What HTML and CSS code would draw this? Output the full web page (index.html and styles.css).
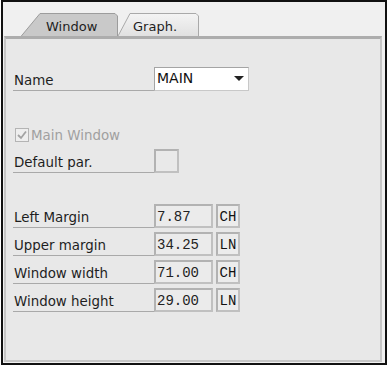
FILE: index.html
```html
<!DOCTYPE html>
<html lang="en">
<head>
  <meta charset="UTF-8">
  <title>Window attributes</title>
  <link rel="stylesheet" href="styles.css">
</head>
<body>
  <div class="frame">
    <div class="tabs">
      <div class="tab tab-active">
        <svg class="tab-shape" width="98" height="24" viewBox="0 0 98 24">
          <polygon points="0.5,24 20,0.5 95,0.5 97.5,3 97.5,24" fill="#c9c9c9" stroke="#9c9c9c"/>
        </svg>
        <span class="tab-text">Window</span>
      </div>
      <div class="tab tab-back">
        <svg class="tab-shape" width="82" height="24" viewBox="0 0 82 24">
          <defs>
            <linearGradient id="tabg" x1="0" y1="0" x2="0" y2="1">
              <stop offset="0" stop-color="#f4f4f4"/>
              <stop offset="1" stop-color="#e0e0e0"/>
            </linearGradient>
          </defs>
          <polygon points="0.5,24 13,0.5 79,0.5 81.5,3 81.5,24" fill="url(#tabg)" stroke="#a9a9a9"/>
        </svg>
        <span class="tab-text">Graph.</span>
      </div>
    </div>

    <div class="panel">
      <div class="row">
        <div class="label">Name</div>
        <div class="select">
          <span class="select-text">MAIN</span>
          <span class="arrow"></span>
        </div>
      </div>

      <div class="check-row">
        <svg class="check" width="14" height="14" viewBox="0 0 14 14">
          <rect x="0.5" y="0.5" width="13" height="13" fill="#eeeeee" stroke="#b4b4b4"/>
          <polyline points="3,7 6,10 11,3.5" fill="none" stroke="#a2a2a2" stroke-width="1.8"/>
        </svg>
        <span class="check-text">Main Window</span>
      </div>

      <div class="row">
        <div class="label">Default par.</div>
        <div class="field field-small"></div>
      </div>

      <div class="group">
        <div class="row">
          <div class="label">Left Margin</div>
          <div class="field">7.87</div>
          <div class="unit">CH</div>
        </div>
        <div class="row">
          <div class="label">Upper margin</div>
          <div class="field">34.25</div>
          <div class="unit">LN</div>
        </div>
        <div class="row">
          <div class="label">Window width</div>
          <div class="field">71.00</div>
          <div class="unit">CH</div>
        </div>
        <div class="row">
          <div class="label">Window height</div>
          <div class="field">29.00</div>
          <div class="unit">LN</div>
        </div>
      </div>
    </div>
  </div>
</body>
</html>
```

FILE: styles.css
```css
body {
  margin: 0;
  background: #ffffff;
  font-family: "DejaVu Sans", Tahoma, sans-serif;
  font-size: 13px;
  color: #1e1e1e;
}
.frame {
  margin-left: 1px;
  width: 386px;
  height: 365px;
  box-sizing: border-box;
  border: 2px solid #111;
  background: #f0f0f0;
}
.tabs {
  display: flex;
  margin-top: 11px;
  padding-left: 17px;
  height: 24px;
}
.tab {
  position: relative;
  height: 24px;
}
.tab-active {
  width: 98px;
  z-index: 2;
}
.tab-back {
  width: 82px;
  margin-left: -1px;
  z-index: 1;
}
.tab-shape {
  position: absolute;
  left: 0;
  top: 0;
}
.tab-text {
  position: relative;
  display: block;
  line-height: 15px;
  padding-top: 6px;
}
.tab-active .tab-text {
  padding-left: 26px;
}
.tab-back .tab-text {
  padding-left: 16px;
}
.panel {
  position: relative;
  z-index: 3;
  margin-left: 1px;
  margin-top: -1px;
  width: 378px;
  height: 326px;
  box-sizing: border-box;
  background: #e8e8e8;
  border: 2px solid #c6c6c6;
  border-top: 3px solid #adadad;
  padding: 28px 0 0 7px;
}
.row {
  display: flex;
  height: 24px;
}
.label {
  width: 141px;
  box-sizing: border-box;
  padding: 0 0 2px 1px;
  border-bottom: 1px solid #a9a9a9;
  display: flex;
  align-items: flex-end;
  line-height: 15px;
  font-size: 13.4px;
}
.select {
  width: 95px;
  box-sizing: border-box;
  background: #ffffff;
  border: 1px solid #a4a4a4;
  border-bottom-color: #c8c8c8;
  border-right-color: #c8c8c8;
  display: flex;
  justify-content: space-between;
  padding: 2px 4px 0 2px;
}
.select-text {
  font-size: 14px;
  line-height: 16px;
  color: #111;
}
.arrow {
  margin-top: 6px;
  width: 0;
  height: 0;
  border-left: 5px solid transparent;
  border-right: 5px solid transparent;
  border-top: 5px solid #222;
}
.check-row {
  display: flex;
  align-items: center;
  height: 20px;
  margin: 34px 0 4px 0;
  padding-left: 2px;
}
.check {
  display: block;
  margin-right: 2px;
}
.check-text {
  color: #a0a0a0;
  line-height: 15px;
  font-size: 13.4px;
}
.field,
.unit {
  box-sizing: border-box;
  height: 24px;
  border: 2px solid #c0c0c0;
  border-top-color: #b2b2b2;
  border-left-color: #b2b2b2;
  background: #ebebeb;
  font-family: "Liberation Mono", "Courier New", monospace;
  font-size: 14px;
  color: #222;
  display: flex;
  align-items: center;
  padding-top: 2px;
}
.field {
  width: 59px;
  padding-left: 1px;
}
.field-small {
  width: 25px;
  background: #e9e9e9;
}
.unit {
  width: 24px;
  margin-left: 3px;
  justify-content: center;
  font-size: 14px;
  color: #111;
  background: #ececec;
}
.group {
  display: flex;
  flex-direction: column;
  gap: 4px;
  margin-top: 31px;
}
```
